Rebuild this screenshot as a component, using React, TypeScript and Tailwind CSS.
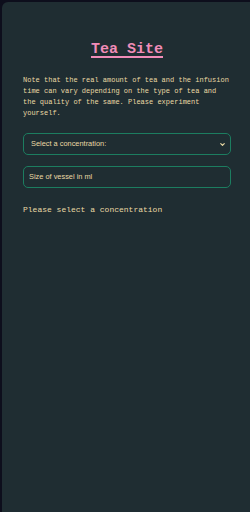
import { ChevronDown } from "lucide-react"

export default function App() {
  return (
    <div className="h-[512px] w-[250px] overflow-hidden bg-[#0d0e1c] pl-[2px] pt-[2px]">
      <div className="h-full rounded-tl-[6px] bg-[#1f2d32] pl-[21px] pr-[19px] pt-[37px]">
        {/* Title */}
        <h1 className="text-center font-['Liberation_Mono',monospace] text-[15px] font-bold leading-[22px] text-[#f08cb8] underline decoration-[2px] underline-offset-[3px]">
          Tea Site
        </h1>

        <p className="mt-[14px] font-['Liberation_Mono',monospace] text-[7px] leading-[11px] text-[#ead9a4]">
          Note that the real amount of tea and the infusion time can vary depending on the type of tea and the quality of the same. Please experiment yourself.
        </p>

        {/* Concentration select */}
        <div className="mt-[14px] flex h-[22px] items-center justify-between rounded-[5px] border border-[#1c7d60] pl-[7px] pr-[4px]">
          <span className="font-['Liberation_Sans',sans-serif] text-[7.4px] text-[#ead9a4]">Select a concentration:</span>
          <ChevronDown className="h-[7px] w-[7px] text-[#ead9a4]" strokeWidth={4} />
        </div>

        {/* Vessel size */}
        <div className="mt-[11px] flex h-[22px] items-center rounded-[5px] border border-[#1c7d60] pl-[5px]">
          <span className="font-['Liberation_Sans',sans-serif] text-[7.4px] text-[#ead9a4]">Size of vessel in ml</span>
        </div>

        <p className="mt-[16px] font-['Liberation_Mono',monospace] text-[8px] leading-[12px] text-[#ead9a4]">
          Please select a concentration
        </p>
      </div>
    </div>
  )
}
